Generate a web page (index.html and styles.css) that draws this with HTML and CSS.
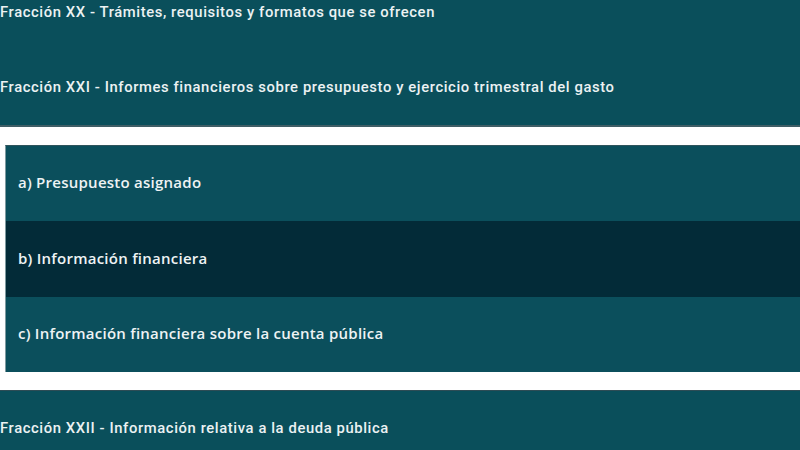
FILE: index.html
```html
<!DOCTYPE html>
<html lang="es">
<head>
<meta charset="utf-8">
<link rel="stylesheet" href="styles.css">
</head>
<body>
<div class="page">
  <div class="group">
    <div class="item">Fracción XX - Trámites, requisitos y formatos que se ofrecen</div>
    <div class="item">Fracción XXI - Informes financieros sobre presupuesto y ejercicio trimestral del gasto</div>
  </div>
  <div class="submenu">
    <div class="sub">a) Presupuesto asignado</div>
    <div class="sub active">b) Información financiera</div>
    <div class="sub">c) Información financiera sobre la cuenta pública</div>
  </div>
  <div class="group">
    <div class="item">Fracción XXII - Información relativa a la deuda pública</div>
  </div>
</div>
</body>
</html>
```
FILE: styles.css
```css
html, body {
  margin: 0;
  padding: 0;
  background: #ffffff;
  overflow: hidden;
}
.page {
  margin-top: -26px;
  display: flex;
  flex-direction: column;
}
.group {
  background: #0a4f5b;
  border-bottom: 2px solid #3f5e66;
  border-top: 1px solid #2e4c55;
}
.group + .submenu {
  margin-top: 18px;
}
.submenu + .group {
  margin-top: 18px;
}
.item {
  height: 75px;
  display: flex;
  align-items: center;
  padding-bottom: 2px;
  box-sizing: border-box;
  color: #ecf2f3;
  font-family: Roboto, "Liberation Sans", sans-serif;
  font-weight: 500;
  font-size: 14.8px;
  letter-spacing: 0.6px;
}
.submenu {
  margin-left: 5px;
  border-top: 1px solid #2f545c;
  border-left: 1px solid #7e9aa0;
  display: flex;
  flex-direction: column;
}
.sub {
  height: 75px;
  box-sizing: border-box;
  padding-bottom: 3px;
  display: flex;
  align-items: center;
  padding-left: 12px;
  background: #0b4f5c;
  color: #eef3f4;
  font-family: "Open Sans", "Liberation Sans", sans-serif;
  font-weight: 600;
  font-size: 15px;
  letter-spacing: 0.25px;
}
.sub.active {
  background: #032b38;
  height: 76px;
}
```
